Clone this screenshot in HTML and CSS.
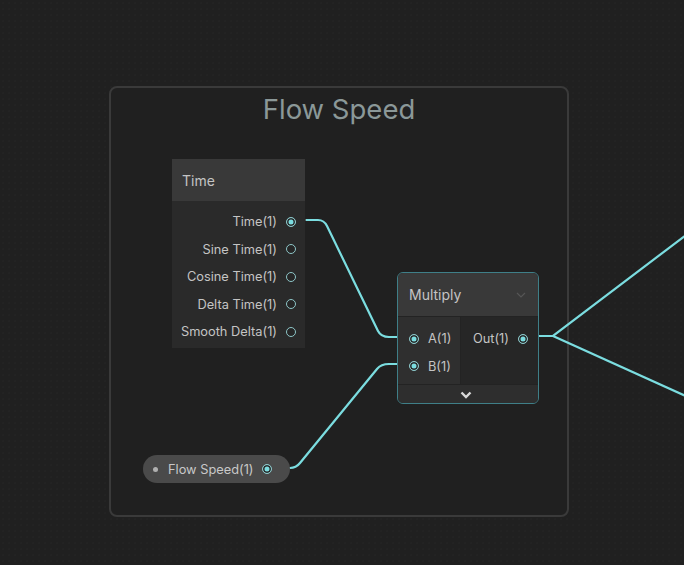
FILE: index.html
```html
<!DOCTYPE html>
<html lang="en">
<head>
    <meta charset="UTF-8">
    <title>Shader Graph - Flow Speed</title>
    <link rel="stylesheet" href="styles.css">
</head>
<body>
    <div class="canvas">
        <!-- group -->
        <div class="group">
            <div class="group-title">Flow Speed</div>
        </div>

        <!-- edges sit under the nodes -->
        <svg class="edges" width="684" height="565" viewBox="0 0 684 565">
            <path class="edge-stub" d="M296 220 H306"/>
            <path class="edge" d="M306 220 H318 Q324 220 327 226 L378 331 Q381 337 389 337 H404"/>
            <path class="edge-stub" d="M404 337 H410"/>
            <path class="edge" d="M272 468 H290 Q296 468 300 463 L377 369 Q381 364 389 364 H404"/>
            <path class="edge-stub" d="M404 364 H410"/>
            <path class="edge-stub" d="M526 336 H536"/>
            <path class="edge" d="M536 336 H553 L690 232"/>
            <path class="edge" d="M553 336 L690 398"/>
        </svg>

        <!-- Time node -->
        <div class="node node-time">
            <div class="node-header">Time</div>
            <div class="node-body outputs">
                <div class="slot"><span>Time(1)</span><i class="port on"></i></div>
                <div class="slot"><span>Sine Time(1)</span><i class="port"></i></div>
                <div class="slot"><span>Cosine Time(1)</span><i class="port"></i></div>
                <div class="slot"><span>Delta Time(1)</span><i class="port"></i></div>
                <div class="slot"><span>Smooth Delta(1)</span><i class="port"></i></div>
            </div>
        </div>

        <!-- Multiply node -->
        <div class="node node-multiply">
            <div class="node-header">
                <span>Multiply</span>
                <svg class="collapse" width="10" height="6" viewBox="0 0 10 6"><path d="M1 1 L5 5 L9 1"/></svg>
            </div>
            <div class="node-split">
                <div class="inputs">
                    <div class="slot"><i class="port on"></i><span>A(1)</span></div>
                    <div class="slot"><i class="port on"></i><span>B(1)</span></div>
                </div>
                <div class="outputs">
                    <div class="slot"><span>Out(1)</span><i class="port on"></i></div>
                </div>
            </div>
            <div class="node-footer">
                <svg width="12" height="8" viewBox="0 0 12 8"><path d="M1.5 1.5 L6 6 L10.5 1.5"/></svg>
            </div>
        </div>

        <!-- property pill -->
        <div class="property">
            <i class="prop-dot"></i>
            <span>Flow Speed(1)</span>
            <i class="port on"></i>
        </div>
    </div>
</body>
</html>
```

FILE: styles.css
```css
body {
    margin: 0;
    background: #202020;
    font-family: Inter, 'Noto Sans', sans-serif;
    color: #c4c4c4;
}

.canvas {
    position: relative;
    width: 684px;
    height: 565px;
    overflow: hidden;
    background-color: #202020;
    background-image: radial-gradient(circle, #252525 0.6px, transparent 0.9px);
    background-size: 6px 6px;
}

.group {
    position: absolute;
    left: 109px;
    top: 86px;
    width: 456px;
    height: 427px;
    border: 2px solid #3a3a3a;
    border-radius: 8px;
    background: #202020;
}

.group-title {
    text-align: center;
    font-size: 27.5px;
    color: #8b9898;
    margin-top: 4px;
}

.edges {
    position: absolute;
    left: 0;
    top: 0;
}

.edge {
    fill: none;
    stroke: #7bdde0;
    stroke-width: 2.2;
}

.edge-stub {
    fill: none;
    stroke: #555a5a;
    stroke-width: 2;
}

/* nodes */
.node {
    position: absolute;
    background: #2a2a2a;
    font-size: 12.8px;
}

.node-header {
    height: 42px;
    background: #393939;
    display: flex;
    align-items: center;
    justify-content: space-between;
    padding: 0 10px;
    font-size: 14px;
    color: #c4c4c4;
}

.slot {
    height: 27.5px;
    display: flex;
    align-items: center;
    gap: 9px;
}

.port {
    display: block;
    box-sizing: border-box;
    width: 10px;
    height: 10px;
    border-radius: 50%;
    border: 1.5px solid #8ec6c8;
    background: #262626;
    flex-shrink: 0;
}

.port.on {
    background: #7bdde0;
    box-shadow: inset 0 0 0 1.5px #262626;
}

.outputs .slot {
    justify-content: flex-end;
}

.node-time {
    left: 172px;
    top: 159px;
    width: 133px;
    height: 189px;
}

.node-time .node-body {
    padding: 7px 9px 0 0;
}

.node-multiply {
    left: 397px;
    top: 272px;
    width: 140px;
    height: 130px;
    border: 1px solid #3f7f88;
    border-radius: 6px;
    overflow: hidden;
    background: #262626;
}

.node-multiply .node-header {
    height: 43px;
    padding: 0 12px 0 11px;
}

.collapse path {
    fill: none;
    stroke: #555;
    stroke-width: 1.2;
}

.node-split {
    display: flex;
    height: 67px;
    border-top: 1px solid #232323;
}

.inputs {
    width: 63px;
    background: #2f2f2f;
    padding: 8px 0 0 11px;
    box-sizing: border-box;
    border-right: 1px solid #232323;
}

.inputs .slot {
    gap: 9px;
}

.node-multiply .outputs {
    flex: 1;
    padding: 8px 10px 0 0;
}

.node-footer {
    height: 20px;
    background: #2e2e2e;
    border-top: 1px solid #232323;
    display: flex;
    align-items: center;
    justify-content: center;
    padding-right: 4px;
}

.node-footer path {
    fill: none;
    stroke: #d8d8d8;
    stroke-width: 2.4;
}

/* property pill */
.property {
    position: absolute;
    left: 143px;
    top: 455px;
    width: 147px;
    height: 28px;
    border-radius: 14px;
    background: #4a4a4a;
    display: flex;
    align-items: center;
    box-sizing: border-box;
    padding: 0 18px 0 10px;
    font-size: 12.8px;
    color: #c8c8c8;
}

.prop-dot {
    display: block;
    width: 5px;
    height: 5px;
    border-radius: 50%;
    background: #b0b0b0;
    margin-right: 10px;
}

.property span {
    flex: 1;
}
```
